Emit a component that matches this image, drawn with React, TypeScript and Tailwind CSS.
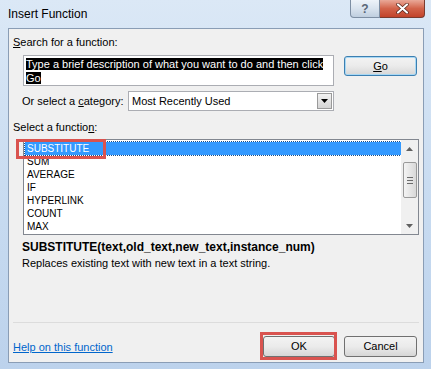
import React from "react";

const ui = { fontFamily: '"Liberation Sans", Arial, sans-serif' };

function Btn({ children, className = "" }: { children: React.ReactNode; className?: string }) {
  return (
    <div
      className={
        "flex items-center justify-center rounded-[3px] border bg-gradient-to-b from-[#f3f3f3] via-[#ebebeb] to-[#d6d6d6] text-[11px] text-black " +
        className
      }
    >
      {children}
    </div>
  );
}

export default function App() {
  const items = ["SUBSTITUTE", "SUM", "AVERAGE", "IF", "HYPERLINK", "COUNT", "MAX"];
  return (
    <div
      className="relative flex h-[369px] w-[431px] flex-col overflow-hidden bg-gradient-to-b from-[#dbe8f6] via-[#c9dcf1] to-[#bcd2ec]"
      style={ui}
    >
      {/* title bar */}
      <div className="flex h-[28px] shrink-0 items-start">
        <div className="pl-[8px] pt-[6px] text-[12px] leading-[16px] text-black">Insert Function</div>
        <div className="ml-auto mr-[6px] flex">
          <div className="flex h-[18px] w-[30px] items-center justify-center rounded-bl-[4px] border border-t-0 border-[#7d8ea3] bg-gradient-to-b from-[#eef3f9] via-[#d9e3ee] to-[#bfcedf] text-[12px] font-bold leading-none text-[#5a6677]">
            ?
          </div>
          <div className="flex h-[18px] w-[45px] items-center justify-center rounded-br-[4px] border border-l-0 border-t-0 border-[#7a3b2f] bg-gradient-to-b from-[#e9a898] via-[#d2634a] to-[#c2432a]">
            <svg width="13" height="11" viewBox="0 0 13 11">
              <path d="M2 1.5 L11 9.5 M11 1.5 L2 9.5" stroke="#4a1a10" strokeWidth="3.4" strokeLinecap="round" />
              <path d="M2 1.5 L11 9.5 M11 1.5 L2 9.5" stroke="#ffffff" strokeWidth="2.2" strokeLinecap="round" />
            </svg>
          </div>
        </div>
      </div>

      {/* client area */}
      <div className="ml-[8px] mr-[7px] mb-[6px] flex flex-1 flex-col border border-[#8a9db5] bg-[#f0f0f0] text-[11px] text-black">
        <div className="ml-[4px] mt-[6px] leading-[14px]">
          <span className="underline">S</span>earch for a function:
        </div>

        <div className="mt-[6px] flex items-start">
          <div className="ml-[14px] h-[31px] w-[311px] border border-[#abadb3] bg-white px-[2px] pt-[1px] text-[11px] leading-[14px]">
            <span className="bg-black text-white">Type a brief description of what you want to do and then click</span>
            <br />
            <span className="bg-black text-white">Go</span>
          </div>
          <Btn className="ml-[10px] mt-[1px] h-[20px] w-[73px] border-[#3c7fb1] shadow-[inset_0_0_0_1px_#a8d8f4]">
            <span className="underline">G</span>o
          </Btn>
        </div>

        <div className="mt-[5px] flex items-center">
          <div className="ml-[13px] w-[106px] leading-[14px]">
            Or select a <span className="underline">c</span>ategory:
          </div>
          <div className="flex h-[20px] w-[206px] items-center border border-[#abadb3] bg-white">
            <div className="flex-1 pl-[3px] leading-[14px]">Most Recently Used</div>
            <div className="mr-[1px] flex h-[16px] w-[15px] items-center justify-center border border-[#9a9a9a] bg-gradient-to-b from-[#f2f2f2] to-[#d4d4d4]">
              <svg width="7" height="4" viewBox="0 0 7 4">
                <path d="M0 0 H7 L3.5 4 Z" fill="#000" />
              </svg>
            </div>
          </div>
        </div>

        <div className="ml-[4px] mt-[9px] leading-[14px]">
          Select a functio<span className="underline">n</span>:
        </div>

        <div className="ml-[14px] mt-[5px] flex h-[96px] w-[396px] border border-[#828790] bg-white">
          <div className="flex-1 pl-[1px] pt-[2px]">
            {items.map((it, i) => (
              <div
                key={it}
                className={
                  "h-[13px] pl-[2px] text-[10px] leading-[13px] " +
                  (i === 0 ? "bg-[#3399ff] text-white outline outline-1 outline-dotted outline-[#1a4f8a]" : "text-black")
                }
              >
                {it}
              </div>
            ))}
          </div>
          <div className="flex w-[17px] flex-col items-center bg-[#f0f0f0]">
            <div className="flex h-[17px] w-full items-center justify-center">
              <svg width="7" height="4" viewBox="0 0 7 4">
                <path d="M0 4 H7 L3.5 0 Z" fill="#606060" />
              </svg>
            </div>
            <div className="mt-[5px] flex h-[36px] w-[14px] flex-col items-center justify-center gap-[2px] rounded-[2px] border border-[#9a9a9a] bg-gradient-to-r from-[#f4f4f4] to-[#d8d8d8]">
              <div className="h-px w-[6px] bg-[#6b6b6b]" />
              <div className="h-px w-[6px] bg-[#6b6b6b]" />
              <div className="h-px w-[6px] bg-[#6b6b6b]" />
            </div>
            <div className="mt-auto flex h-[17px] w-full items-center justify-center">
              <svg width="7" height="4" viewBox="0 0 7 4">
                <path d="M0 0 H7 L3.5 4 Z" fill="#606060" />
              </svg>
            </div>
          </div>
        </div>

        <div className="ml-[13px] mt-[4px] text-[12px] font-bold leading-[16px]">
          SUBSTITUTE(text,old_text,new_text,instance_num)
        </div>
        <div className="ml-[13px] text-[11px] leading-[16px]">Replaces existing text with new text in a text string.</div>

        <div className="mx-[4px] mt-auto h-px bg-[#dcdcdc]" />

        <div className="mb-[5px] mt-[13px] flex items-center">
          <div className="ml-[4px] text-[11px] leading-[14px] text-[#0066cc] underline">Help on this function</div>
          <Btn className="ml-auto h-[21px] w-[72px] border-[#707070]">OK</Btn>
          <Btn className="ml-[9px] mr-[6px] h-[21px] w-[73px] border-[#707070]">Cancel</Btn>
        </div>
      </div>

      {/* red annotation boxes */}
      <div className="pointer-events-none absolute left-[16px] top-[139px] h-[20px] w-[90px] border-[3px] border-[#d9534f]" />
      <div className="pointer-events-none absolute left-[260px] top-[332px] h-[28px] w-[77px] border-[3px] border-[#d9534f]" />
    </div>
  );
}
